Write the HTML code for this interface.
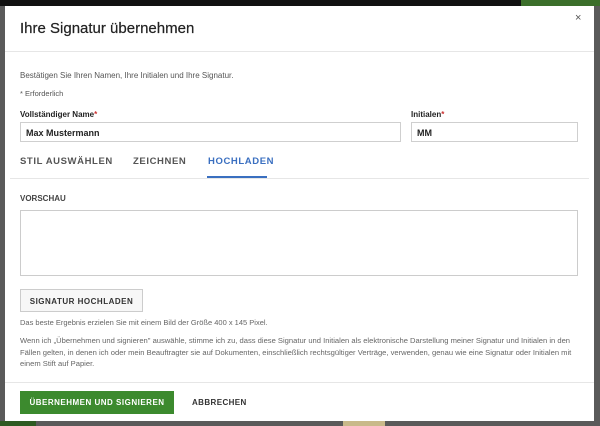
<!DOCTYPE html>
<html><head><meta charset="utf-8"><style>
*{margin:0;padding:0;box-sizing:border-box}
body{width:600px;height:426px;background:#5a5a5a;font-family:"Liberation Sans",sans-serif;position:relative;overflow:hidden;color:#222}
.top{position:absolute;left:0;top:0;width:600px;height:6px;background:#111}
.m{position:absolute;left:5px;top:6px;width:589px;height:415px;background:#fff}
.a{position:absolute;white-space:nowrap}
.hr{position:absolute;left:0;right:0;height:1px;background:#e6e6e6}
.inp{position:absolute;border:1px solid #cfcfcf;height:20px;font-size:9px;font-weight:bold;padding:5px 0 0 5px}
.tab{font-size:9.5px;font-weight:bold;letter-spacing:.6px;color:#555}
.sm{font-size:7.5px;color:#666}
</style></head><body>
<div class="top"></div>
<div class="a" style="left:521px;top:0;width:79px;height:6px;background:#3b6e2a"></div>
<div class="m">
<div class="a" style="left:15px;top:14px;font-size:15px;letter-spacing:0;color:#222;-webkit-text-stroke:0.2px #222">Ihre Signatur übernehmen</div>
<div class="a" style="left:570px;top:6px;font-size:11px;color:#555">×</div>
<div class="hr" style="top:45px"></div>
<div class="a" style="left:15px;top:65px;font-size:8px;color:#555">Bestätigen Sie Ihren Namen, Ihre Initialen und Ihre Signatur.</div>
<div class="a" style="left:15px;top:83px;font-size:7.5px;color:#555">* Erforderlich</div>
<div class="a" style="left:15px;top:104px;font-size:8px;font-weight:bold">Vollständiger Name<span style="color:#c33">*</span></div>
<div class="a" style="left:406px;top:104px;font-size:8px;font-weight:bold">Initialen<span style="color:#c33">*</span></div>
<div class="inp" style="left:15px;top:116px;width:381px">Max Mustermann</div>
<div class="inp" style="left:406px;top:116px;width:167px">MM</div>
<div class="a tab" style="left:15px;top:150px">STIL AUSWÄHLEN</div>
<div class="a tab" style="left:128px;top:150px">ZEICHNEN</div>
<div class="a tab" style="left:203px;top:150px;color:#3a6fc0">HOCHLADEN</div>
<div class="a" style="left:202px;top:170px;width:60px;height:2px;background:#3a6fc0"></div>
<div class="hr" style="top:172px;left:5px;right:5px"></div>
<div class="a" style="left:15px;top:188px;font-size:8px;font-weight:bold;color:#444">VORSCHAU</div>
<div class="a" style="left:15px;top:204px;width:558px;height:66px;border:1px solid #ccc"></div>
<div class="a" style="left:15px;top:283px;width:123px;height:23px;border:1px solid #ccc;background:#f7f7f7;font-size:8px;font-weight:bold;letter-spacing:.5px;color:#333;padding-top:7px;text-align:center">SIGNATUR HOCHLADEN</div>
<div class="a sm" style="left:15px;top:312px">Das beste Ergebnis erzielen Sie mit einem Bild der Größe 400 x 145 Pixel.</div>
<div class="a sm" style="left:15px;top:329px;white-space:normal;width:560px;line-height:11.5px;font-size:7.6px">Wenn ich „Übernehmen und signieren" auswähle, stimme ich zu, dass diese Signatur und Initialen als elektronische Darstellung meiner Signatur und Initialen in den Fällen gelten, in denen ich oder mein Beauftragter sie auf Dokumenten, einschließlich rechtsgültiger Verträge, verwenden, genau wie eine Signatur oder Initialen mit einem Stift auf Papier.</div>
<div class="hr" style="top:376px"></div>
<div class="a" style="left:15px;top:385px;width:154px;height:23px;background:#3c8a2e;color:#fff;font-size:8px;font-weight:bold;letter-spacing:.5px;text-align:center;padding-top:7px">ÜBERNEHMEN UND SIGNIEREN</div>
<div class="a" style="left:187px;top:392px;font-size:8px;font-weight:bold;letter-spacing:.4px;color:#333">ABBRECHEN</div>
</div>
<div class="a" style="left:0;top:421px;width:36px;height:5px;background:#2e5a22"></div>
<div class="a" style="left:343px;top:421px;width:42px;height:5px;background:#c9b98a"></div>
</body></html>
